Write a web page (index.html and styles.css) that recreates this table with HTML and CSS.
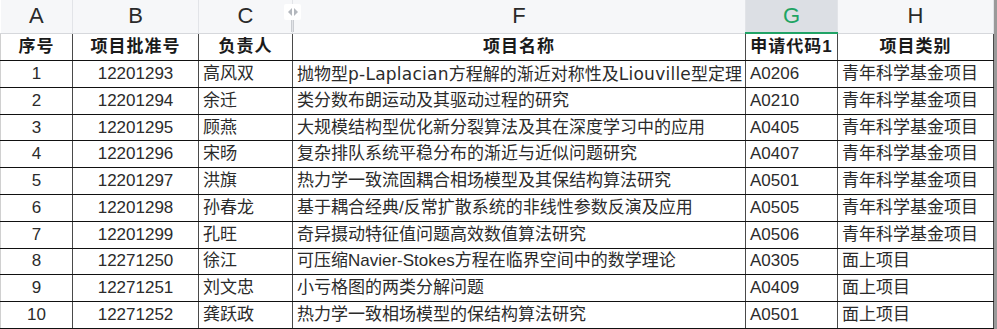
FILE: index.html
```html
<!DOCTYPE html>
<html lang="zh">
<head>
<meta charset="utf-8">
<link rel="stylesheet" href="styles.css">
</head>
<body>
<div class="sheet">
  <table class="grid">
    <colgroup>
      <col class="c-a"><col class="c-b"><col class="c-c"><col class="c-f"><col class="c-g"><col class="c-h">
    </colgroup>
    <thead>
      <tr class="letters">
        <th>A</th><th>B</th><th class="handle-cell">C<span class="handle"><span class="tri-l"></span><span class="tri-r"></span></span></th><th>F</th><th class="sel">G</th><th>H</th>
      </tr>
    </thead>
    <tbody>
      <tr class="head">
        <td>序号</td><td>项目批准号</td><td>负责人</td><td>项目名称</td><td>申请代码1</td><td>项目类别</td>
      </tr>
      <tr><td class="ctr">1</td><td class="ctr">12201293</td><td>高风双</td><td>抛物型<span class="lat">p-Laplacian</span>方程解的渐近对称性及<span class="lat">Liouville</span>型定理</td><td>A0206</td><td>青年科学基金项目</td></tr>
      <tr><td class="ctr">2</td><td class="ctr">12201294</td><td>余迁</td><td>类分数布朗运动及其驱动过程的研究</td><td>A0210</td><td>青年科学基金项目</td></tr>
      <tr><td class="ctr">3</td><td class="ctr">12201295</td><td>顾燕</td><td>大规模结构型优化新分裂算法及其在深度学习中的应用</td><td>A0405</td><td>青年科学基金项目</td></tr>
      <tr><td class="ctr">4</td><td class="ctr">12201296</td><td>宋旸</td><td>复杂排队系统平稳分布的渐近与近似问题研究</td><td>A0407</td><td>青年科学基金项目</td></tr>
      <tr><td class="ctr">5</td><td class="ctr">12201297</td><td>洪旗</td><td>热力学一致流固耦合相场模型及其保结构算法研究</td><td>A0501</td><td>青年科学基金项目</td></tr>
      <tr><td class="ctr">6</td><td class="ctr">12201298</td><td>孙春龙</td><td>基于耦合经典/反常扩散系统的非线性参数反演及应用</td><td>A0505</td><td>青年科学基金项目</td></tr>
      <tr><td class="ctr">7</td><td class="ctr">12201299</td><td>孔旺</td><td>奇异摄动特征值问题高效数值算法研究</td><td>A0506</td><td>青年科学基金项目</td></tr>
      <tr><td class="ctr">8</td><td class="ctr">12271250</td><td>徐江</td><td>可压缩Navier-Stokes方程在临界空间中的数学理论</td><td>A0305</td><td>面上项目</td></tr>
      <tr><td class="ctr">9</td><td class="ctr">12271251</td><td>刘文忠</td><td>小亏格图的两类分解问题</td><td>A0409</td><td>面上项目</td></tr>
      <tr><td class="ctr">10</td><td class="ctr">12271252</td><td>龚跃政</td><td>热力学一致相场模型的保结构算法研究</td><td>A0501</td><td>面上项目</td></tr>
    </tbody>
  </table>
  <div class="edge"></div>
</div>
</body>
</html>
```
FILE: styles.css
```css
html, body {
  margin: 0;
  padding: 0;
  background: #ffffff;
}
.sheet {
  display: flex;
  width: 997px;
  height: 329px;
  overflow: hidden;
}
.edge {
  width: 4px;
  flex: none;
  background: #9a9a9a;
}
.grid {
  border-collapse: collapse;
  table-layout: fixed;
  width: 993px;
  font-family: "Liberation Sans", "Noto Sans CJK SC", sans-serif;
  font-size: 17px;
  color: #2b2b2b;
}
.c-a { width: 72px; }
.c-b { width: 126px; }
.c-c { width: 94px; }
.c-f { width: 453px; }
.c-g { width: 92px; }
.c-h { width: 156px; }

.letters th {
  height: 32px;
  padding: 0;
  background: #f6f7f9;
  border-right: 1px solid #e2e4e8;
  border-bottom: 1px solid #d6d8dc;
  font-weight: normal;
  font-size: 22px;
  color: #2a2a2a;
  text-align: center;
  vertical-align: middle;
}
.letters th.sel {
  background: #dcdfe4;
  color: #1fa463;
  border-bottom: 2px solid #21a366;
}
.handle-cell {
  position: relative;
}
.handle {
  position: absolute;
  right: -9px;
  top: 4px;
  width: 17px;
  height: 16px;
  background: #ffffff;
  border-radius: 2px;
  display: flex;
  align-items: center;
  justify-content: center;
  gap: 2px;
  z-index: 2;
}
.handle::after {
  content: "";
  position: absolute;
  left: 7px;
  top: 16px;
  width: 1px;
  height: 12px;
  border-left: 1px solid #c9ccd1;
  border-right: 1px solid #c9ccd1;
}
.tri-l {
  width: 0; height: 0;
  border-top: 4px solid transparent;
  border-bottom: 4px solid transparent;
  border-right: 4px solid #b3b7bd;
}
.tri-r {
  width: 0; height: 0;
  border-top: 4px solid transparent;
  border-bottom: 4px solid transparent;
  border-left: 4px solid #b3b7bd;
}

tbody td {
  height: 25.6px;
  padding: 0 4px;
  border-right: 1px solid #4a4a4a;
  border-bottom: 1px solid #111;
  white-space: nowrap;
  overflow: hidden;
  vertical-align: middle;
  line-height: 20px;
}
tbody td:first-child {
  border-left: 1px solid #d0d0d0;
}
tbody tr.head td {
  height: 26px;
  font-weight: bold;
  text-align: center;
  color: #1a1a1a;
  letter-spacing: 1px;
}
td.ctr {
  text-align: center;
}
.lat {
  font-family: "DejaVu Sans", "Liberation Sans", sans-serif;
  letter-spacing: 0.25px;
}
```
